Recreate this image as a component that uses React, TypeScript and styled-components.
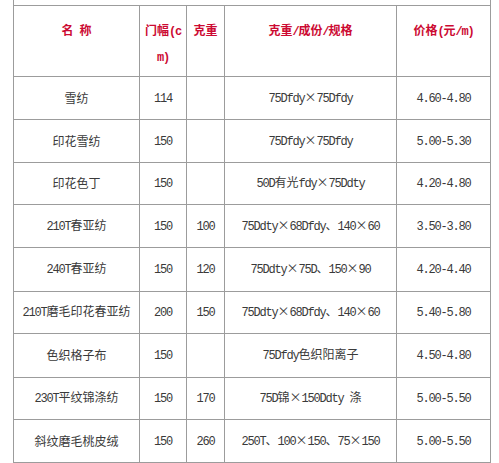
import React from "react";
import styled, { createGlobalStyle } from "styled-components";

const Global = createGlobalStyle`
  html, body { margin: 0; padding: 0; background: #ffffff; }
  body { font-family: "Noto Sans CJK SC", sans-serif; }
`;

const Page = styled.div`
  width: 499px;
  height: 463px;
  overflow: hidden;
  background: #fff;
  padding-left: 13px;
  box-sizing: border-box;
`;

const Table = styled.table`
  border-collapse: collapse;
  table-layout: fixed;
  width: 477px;
`;

const Row = styled.tr<{ $h: number }>`
  height: ${(p) => p.$h}px;
`;

const TopCell = styled.td`
  border: 1px solid #9c9c9c;
  border-top: none;
  padding: 0;
  height: 4px;
`;

const HeadCell = styled.th`
  border: 1px solid #9c9c9c;
  padding: 12px 0 0;
  vertical-align: top;
  text-align: center;
  line-height: 24px;
  font-weight: bold;
  font-size: 12px;
  color: #cc0a32;
`;

const Cell = styled.td`
  border: 1px solid #9c9c9c;
  padding: 0;
  vertical-align: middle;
  text-align: center;
  font-size: 12px;
  line-height: 16px;
  color: #3a3a3a;
  white-space: nowrap;
`;

const Han = styled.span`
  font-family: "Noto Sans CJK SC", sans-serif;
  font-size: 12px;
`;

const Latin = styled.span`
  font-family: "Liberation Mono", monospace;
  font-size: 12px;
  letter-spacing: -1.2px;
`;

const CJK = /[\u2e80-\u9fff\u3000-\u303f\uff00-\uffef\u00d7]+|[^\u2e80-\u9fff\u3000-\u303f\uff00-\uffef\u00d7]+/g;

const Mixed: React.FC<{ text: string }> = ({ text }) => {
  const runs = text.match(CJK) ?? [];
  return (
    <>
      {runs.map((r, i) =>
        /[\u2e80-\u9fff\u3000-\u303f\uff00-\uffef\u00d7]/.test(r) ? (
          <Han key={i}>{r}</Han>
        ) : (
          <Latin key={i}>{r}</Latin>
        )
      )}
    </>
  );
};

const rows: { h: number; cells: string[] }[] = [
  { h: 43, cells: ["雪纺", "114", "", "75Dfdy×75Dfdy", "4.60-4.80"] },
  { h: 43, cells: ["印花雪纺", "150", "", "75Dfdy×75Dfdy", "5.00-5.30"] },
  { h: 42, cells: ["印花色丁", "150", "", "50D有光fdy×75Ddty", "4.20-4.80"] },
  { h: 43, cells: ["210T春亚纺", "150", "100", "75Ddty×68Dfdy、140×60", "3.50-3.80"] },
  { h: 44, cells: ["240T春亚纺", "150", "120", "75Ddty×75D、150×90", "4.20-4.40"] },
  { h: 42, cells: ["210T磨毛印花春亚纺", "200", "150", "75Ddty×68Dfdy、140×60", "5.40-5.80"] },
  { h: 44, cells: ["色织格子布", "150", "", "75Dfdy色织阳离子", "4.50-4.80"] },
  { h: 42, cells: ["230T平纹锦涤纺", "150", "170", "75D锦×150Ddty 涤", "5.00-5.50"] },
  { h: 43, cells: ["斜纹磨毛桃皮绒", "150", "260", "250T、100×150、75×150", "5.00-5.50"] },
];

export default function App() {
  return (
    <Page>
      <Global />
      <Table>
        <colgroup>
          <col style={{ width: 126 }} />
          <col style={{ width: 47 }} />
          <col style={{ width: 38 }} />
          <col style={{ width: 172 }} />
          <col style={{ width: 94 }} />
        </colgroup>
        <tbody>
          <Row $h={5}>
            <TopCell colSpan={5} />
          </Row>
          <Row $h={71}>
            <HeadCell><Mixed text="名 称" /></HeadCell>
            <HeadCell>
              <Mixed text="门幅(c" />
              <br />
              <Mixed text="m)" />
            </HeadCell>
            <HeadCell><Mixed text="克重" /></HeadCell>
            <HeadCell><Mixed text="克重/成份/规格" /></HeadCell>
            <HeadCell><Mixed text="价格(元/m)" /></HeadCell>
          </Row>
          {rows.map((r, i) => (
            <Row key={i} $h={r.h}>
              {r.cells.map((c, j) => (
                <Cell key={j}>{c ? <Mixed text={c} /> : null}</Cell>
              ))}
            </Row>
          ))}
        </tbody>
      </Table>
    </Page>
  );
}
